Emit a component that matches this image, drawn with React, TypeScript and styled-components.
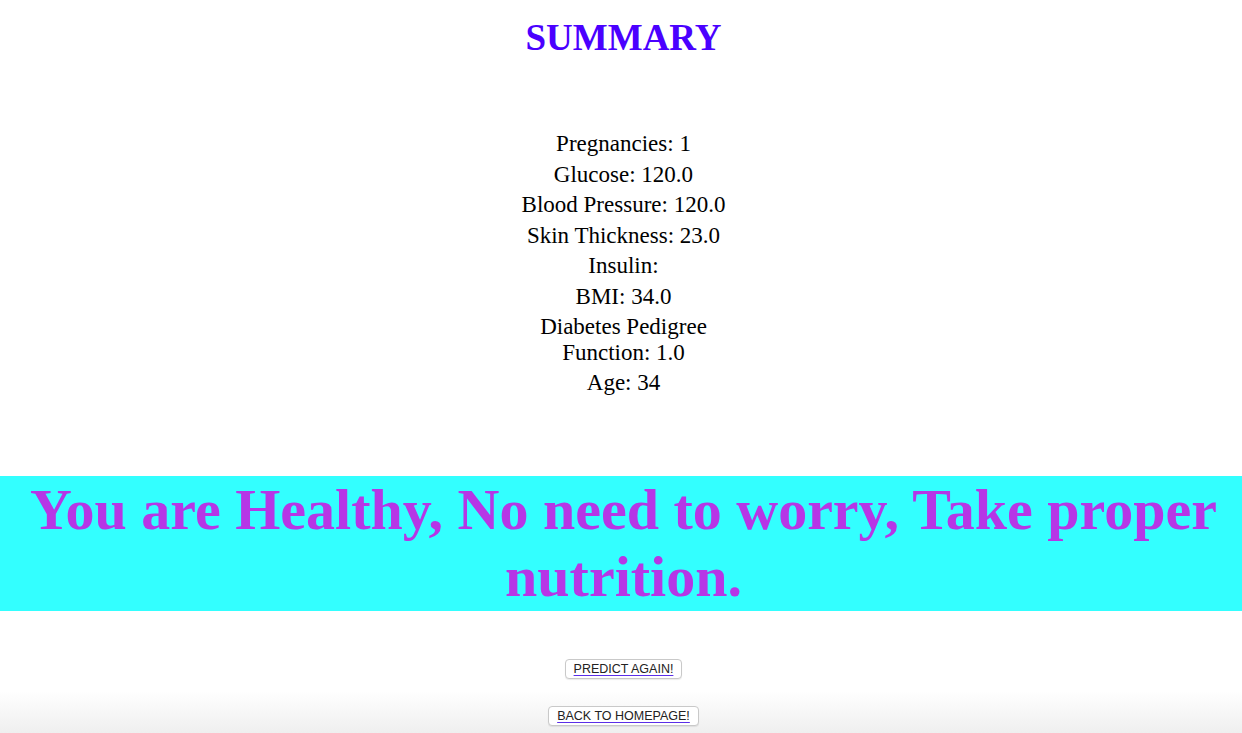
import React from "react";
import styled, { createGlobalStyle } from "styled-components";

const Global = createGlobalStyle`
  html, body { margin: 0; padding: 0; background: #ffffff; }
  body { font-family: "Liberation Serif", "Times New Roman", serif; }
`;

const Page = styled.div`
  display: flex;
  flex-direction: column;
  align-items: center;
  padding-top: 18px;
  padding-left: 5px;
  min-height: 733px;
  box-sizing: border-box;
  background: linear-gradient(to bottom, #ffffff 0, #ffffff calc(100% - 42px), #efefef 100%);
`;

const Title = styled.h1`
  margin: 0;
  font-family: "Liberation Serif", "Times New Roman", serif;
  font-weight: bold;
  font-size: 37px;
  line-height: 40px;
  color: #4a00ff;
`;

const Details = styled.div`
  margin-top: 73px;
  width: 230px;
  display: flex;
  flex-direction: column;
  gap: 5px;
  text-align: center;
`;

const Item = styled.div`
  font-size: 23px;
  line-height: 25.5px;
  color: #000;
`;

const Banner = styled.div`
  margin-top: 80px;
  margin-left: -5px;
  align-self: stretch;
  background: #33ffff;
  padding: 0 0 0 5px;
  text-align: center;
  font-weight: bold;
  font-size: 58px;
  line-height: 67.5px;
  color: #b636e6;
`;

const Actions = styled.div`
  margin-top: 48px;
  display: flex;
  flex-direction: column;
  align-items: center;
  gap: 27px;
`;

const Button = styled.button`
  height: 20px;
  padding: 0 8px;
  box-sizing: border-box;
  border: 1px solid #c9c9c9;
  border-radius: 4px;
  background: #ffffff;
  box-shadow: 0 1px 1px rgba(0, 0, 0, 0.08);
  font-family: "Liberation Sans", Arial, sans-serif;
  font-size: 12.5px;
  line-height: 18px;
  color: #222;
  cursor: pointer;
`;

const LinkText = styled.a`
  color: #222;
  text-decoration: underline;
  text-decoration-color: #5b2ee8;
  text-underline-offset: 2px;
`;

const items = [
  "Pregnancies: 1",
  "Glucose: 120.0",
  "Blood Pressure: 120.0",
  "Skin Thickness: 23.0",
  "Insulin:",
  "BMI: 34.0",
  "Diabetes Pedigree Function: 1.0",
  "Age: 34",
];

export default function App() {
  return (
    <>
      <Global />
      <Page>
        <Title>SUMMARY</Title>
        <Details>
          {items.map((t) => (
            <Item key={t}>{t}</Item>
          ))}
        </Details>
        <Banner>You are Healthy, No need to worry, Take proper nutrition.</Banner>
        <Actions>
          <Button>
            <LinkText>PREDICT AGAIN!</LinkText>
          </Button>
          <Button>
            <LinkText>BACK TO HOMEPAGE!</LinkText>
          </Button>
        </Actions>
      </Page>
    </>
  );
}
